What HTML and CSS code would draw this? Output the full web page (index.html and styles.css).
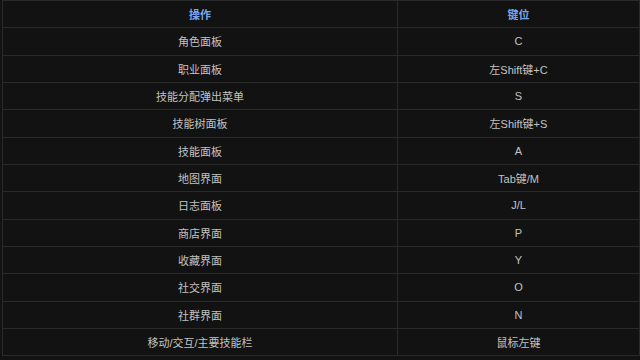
FILE: index.html
```html
<!DOCTYPE html>
<html lang="zh">
<head>
<meta charset="utf-8">
<link rel="stylesheet" href="styles.css">
</head>
<body>
<table class="keys">
  <thead>
    <tr><th class="col-op">操作</th><th class="col-key">键位</th></tr>
  </thead>
  <tbody>
    <tr><td>角色面板</td><td>C</td></tr>
    <tr><td>职业面板</td><td>左Shift键+C</td></tr>
    <tr><td>技能分配弹出菜单</td><td>S</td></tr>
    <tr><td>技能树面板</td><td>左Shift键+S</td></tr>
    <tr><td>技能面板</td><td>A</td></tr>
    <tr><td>地图界面</td><td>Tab键/M</td></tr>
    <tr><td>日志面板</td><td>J/L</td></tr>
    <tr><td>商店界面</td><td>P</td></tr>
    <tr><td>收藏界面</td><td>Y</td></tr>
    <tr><td>社交界面</td><td>O</td></tr>
    <tr><td>社群界面</td><td>N</td></tr>
    <tr><td>移动/交互/主要技能栏</td><td>鼠标左键</td></tr>
  </tbody>
</table>
</body>
</html>
```
FILE: styles.css
```css
html, body {
  margin: 0;
  padding: 0;
  background: #121212;
}
body {
  font-family: "Liberation Sans", "Noto Sans CJK SC", sans-serif;
  font-size: 11px;
  color: #c2c2c2;
}
.keys {
  border-collapse: collapse;
  margin-left: 2px;
  width: 636px;
  table-layout: fixed;
}
.keys th, .keys td {
  border: 1px solid #2a2a2a;
  height: 26.33px;
  padding: 0;
  text-align: center;
  vertical-align: middle;
}
.keys th {
  color: #79a6ea;
  font-weight: bold;
}
.col-op { width: 394px; }
.col-key { width: 241px; }
```
